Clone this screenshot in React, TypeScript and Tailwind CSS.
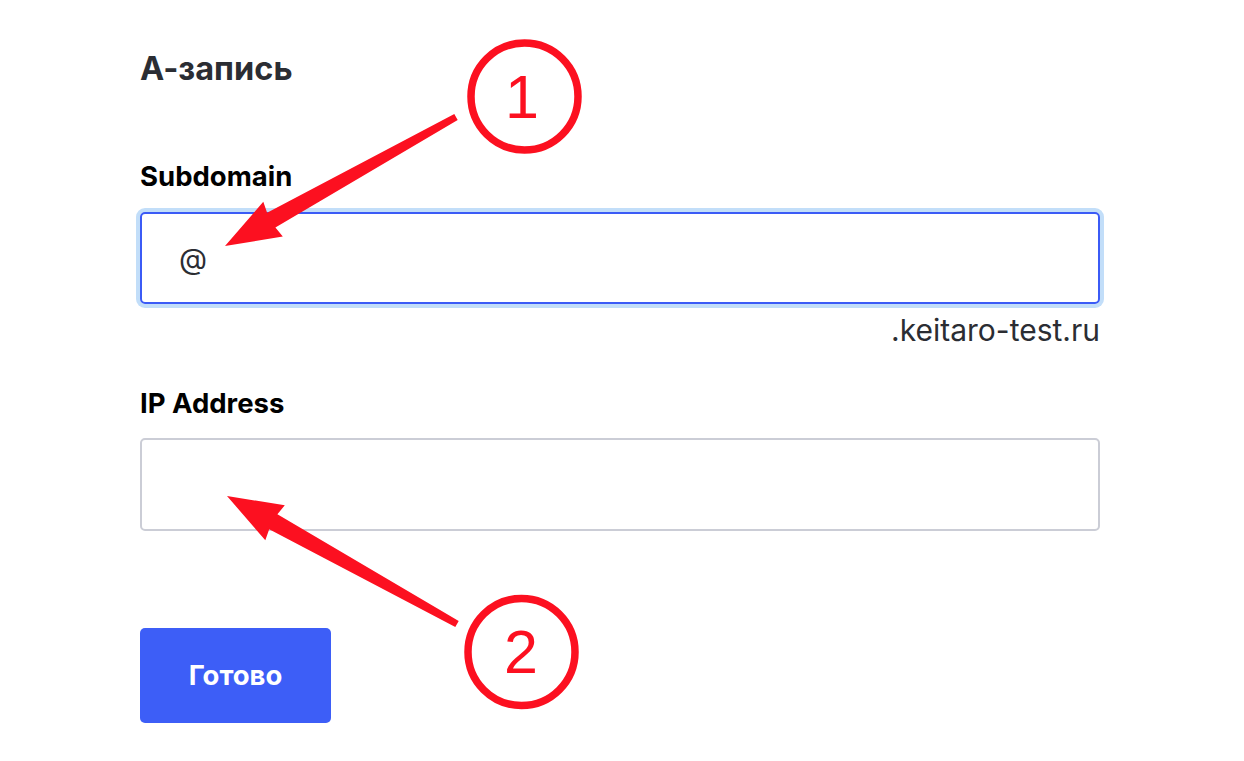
import React from "react";

type P = [number, number];

function arrowPoints(tip: P, tail: P): string {
  const dx = tail[0] - tip[0];
  const dy = tail[1] - tip[1];
  const len = Math.hypot(dx, dy);
  const ux = dx / len;
  const uy = dy / len;
  const nx = -uy;
  const ny = ux;
  const at = (u: number, n: number): P => [tip[0] + ux * u + nx * n, tip[1] + uy * u + ny * n];
  const pts: P[] = [
    tip,
    at(55, -20),
    at(53, -8.5),
    at(len, -3.5),
    at(len, 3.5),
    at(53, 8.5),
    at(55, 20),
  ];
  return pts.map((p) => `${p[0].toFixed(1)},${p[1].toFixed(1)}`).join(" ");
}

function Annotations() {
  const red = "#fc1020";
  return (
    <svg
      className="pointer-events-none absolute left-0 top-0"
      width={1244}
      height={761}
      viewBox="0 0 1244 761"
    >
      <circle cx={524.5} cy={96.5} r={53.5} fill="none" stroke={red} strokeWidth={7.5} />
      <text
        x={522}
        y={118}
        textAnchor="middle"
        fill={red}
        fontSize={61}
        fontFamily="'Liberation Sans', Arial, sans-serif"
      >
        1
      </text>
      <polygon points={arrowPoints([225, 246], [456, 117])} fill={red} />

      <circle cx={521.5} cy={652} r={53.5} fill="none" stroke={red} strokeWidth={7.5} />
      <text
        x={521}
        y={673}
        textAnchor="middle"
        fill={red}
        fontSize={61}
        fontFamily="'Liberation Sans', Arial, sans-serif"
      >
        2
      </text>
      <polygon points={arrowPoints([227, 496], [457, 624])} fill={red} />
    </svg>
  );
}

export default function App() {
  return (
    <div
      className="relative h-[761px] w-[1244px] overflow-hidden bg-white"
      style={{ fontFamily: "Inter, 'Noto Sans', sans-serif" }}
    >
      <div className="ml-[140px] flex w-[960px] flex-col pt-[49px]">
        <h1 className="text-[32.5px] font-bold leading-[40px] text-[#2b2d33]">А-запись</h1>

        <label className="mt-[71px] text-[27.5px] font-bold leading-[32px] text-black">
          Subdomain
        </label>
        <div className="mt-[20px] flex h-[92px] w-[960px] items-center rounded-[5px] border-2 border-[#3b5bf6] pl-[37px] shadow-[0_0_0_4px_#c2def9]">
          <span className="text-[29px] leading-none text-[#2b2d33]">@</span>
        </div>
        <div className="mt-[8px] text-right text-[30px] leading-[36px] text-[#2b2d33]">
          .keitaro-test.ru
        </div>

        <label className="mt-[39px] text-[27.5px] font-bold leading-[32px] text-black">
          IP Address
        </label>
        <div className="mt-[19px] h-[93px] w-[960px] rounded-[5px] border-2 border-[#cbcdd6]" />

        <button className="mt-[97px] flex h-[95px] w-[191px] items-center justify-center rounded-[5px] bg-[#3d5ef7] text-[27.5px] font-bold text-white">
          Готово
        </button>
      </div>
      <Annotations />
    </div>
  );
}
